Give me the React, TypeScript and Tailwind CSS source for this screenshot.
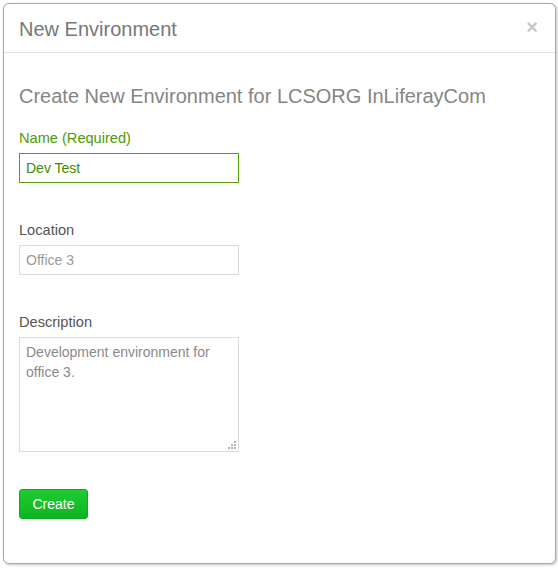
import React from "react";

const ResizeDots = () => (
    <svg className="absolute right-[2px] bottom-[2px]" width="9" height="9" viewBox="0 0 9 9">
        <g fill="#b5b5b5">
            <rect x="6" y="0" width="2" height="2" />
            <rect x="3" y="3" width="2" height="2" />
            <rect x="6" y="3" width="2" height="2" />
            <rect x="0" y="6" width="2" height="2" />
            <rect x="3" y="6" width="2" height="2" />
            <rect x="6" y="6" width="2" height="2" />
        </g>
    </svg>
);

export default function App() {
    return (
        <div className="w-[558px] h-[568px] bg-white p-[3px] font-['Liberation_Sans',Arial,sans-serif]">
            <div className="w-[553px] h-[561px] bg-white border border-[#a8a8a8] rounded-[6px] shadow-[1px_1px_3px_rgba(0,0,0,0.25)] flex flex-col">
                <div className="h-[49px] border-b border-[#e5e5e5] px-[15px] flex items-center justify-between">
                    <h3 className="text-[20px] leading-[22px] text-[#777] mt-[1px]">New Environment</h3>
                    <span className="text-[#c8c8c8] text-[20px] font-bold leading-none mr-[2px] -mt-[3px]">×</span>
                </div>

                <div className="px-[15px] pt-[32px] flex flex-col">
                    <h2 className="text-[20px] leading-[22px] text-[#858585]">
                        Create New Environment for LCSORG InLiferayCom
                    </h2>

                    <label className="mt-[21px] text-[14.6px] leading-[20px] text-[#4e9a06]">Name (Required)</label>
                    <input
                        defaultValue="Dev Test"
                        className="mt-[5px] w-[220px] h-[30px] border border-[#5a9e0a] px-[6px] text-[14px] text-[#3f8a00] outline-none"
                    />

                    <label className="mt-[37px] text-[14.6px] leading-[20px] text-[#555]">Location</label>
                    <input
                        placeholder="Office 3"
                        className="mt-[5px] w-[220px] h-[30px] border border-[#dcdcdc] px-[6px] text-[14px] text-[#555] placeholder:text-[#9a9a9a] outline-none"
                    />

                    <label className="mt-[37px] text-[14.6px] leading-[20px] text-[#555]">Description</label>
                    <div className="relative mt-[5px] w-[220px] h-[115px]">
                        <textarea
                            defaultValue="Development environment for office 3."
                            className="w-full h-full border border-[#dcdcdc] px-[6px] py-[4px] text-[14px] leading-[20px] text-[#8a8a8a] resize-none outline-none block"
                        />
                        <ResizeDots />
                    </div>

                    <div className="mt-[37px]">
                        <button className="w-[69px] h-[30px] rounded-[3px] border border-[#0fa71f] bg-gradient-to-b from-[#1fcc30] to-[#0fb323] text-white text-[14px]">
                            Create
                        </button>
                    </div>
                </div>
            </div>
        </div>
    );
}
